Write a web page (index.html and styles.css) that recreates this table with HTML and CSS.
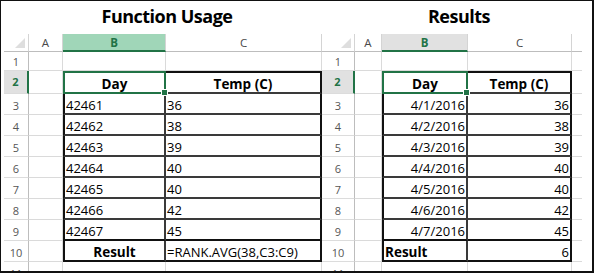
FILE: index.html
```html
<!DOCTYPE html>
<html>
<head>
<meta charset="utf-8">
<link rel="stylesheet" href="styles.css">
</head>
<body>
<div class="frame">
  <section class="panel panel-l">
    <h2 class="title">Function Usage</h2>
    <div class="sheet sheet-l">
      <div class="corner"><svg width="10" height="10" viewBox="0 0 10 10"><polygon points="10,0 10,10 0,10" fill="#dedede"/></svg></div>
      <div class="ch">A</div><div class="ch ch-sel-l">B</div><div class="ch">C</div>

      <div class="rh">1</div><div class="c"></div><div class="c"></div><div class="c"></div>
      <div class="rh rh-sel">2</div><div class="c"></div><div class="c t tl tt sel hd center">Day</div><div class="c t tr tt hd center">Temp (C)</div>
      <div class="rh">3</div><div class="c"></div><div class="c t tl">42461</div><div class="c t tr">36</div>
      <div class="rh">4</div><div class="c"></div><div class="c t tl">42462</div><div class="c t tr">38</div>
      <div class="rh">5</div><div class="c"></div><div class="c t tl">42463</div><div class="c t tr">39</div>
      <div class="rh">6</div><div class="c"></div><div class="c t tl">42464</div><div class="c t tr">40</div>
      <div class="rh">7</div><div class="c"></div><div class="c t tl">42465</div><div class="c t tr">40</div>
      <div class="rh">8</div><div class="c"></div><div class="c t tl">42466</div><div class="c t tr">42</div>
      <div class="rh">9</div><div class="c"></div><div class="c t tl tm">42467</div><div class="c t tr tm">45</div>
      <div class="rh">10</div><div class="c"></div><div class="c t tl tb hd center">Result</div><div class="c t tr tb">=RANK.AVG(38,C3:C9)</div>
      <div class="rh">11</div><div class="c"></div><div class="c"></div><div class="c"></div>
    </div>
  </section>
  <section class="panel panel-r">
    <h2 class="title">Results</h2>
    <div class="sheet sheet-r">
      <div class="corner"><svg width="10" height="10" viewBox="0 0 10 10"><polygon points="10,0 10,10 0,10" fill="#dedede"/></svg></div>
      <div class="ch">A</div><div class="ch ch-sel-r">B</div><div class="ch">C</div><div class="ch ch-end"></div>

      <div class="rh">1</div><div class="c"></div><div class="c"></div><div class="c"></div><div class="c end"></div>
      <div class="rh rh-sel">2</div><div class="c"></div><div class="c t tl tt sel hd center">Day</div><div class="c t tr tt hd center">Temp (C)</div><div class="c end"></div>
      <div class="rh">3</div><div class="c"></div><div class="c t tl right">4/1/2016</div><div class="c t tr right">36</div><div class="c end"></div>
      <div class="rh">4</div><div class="c"></div><div class="c t tl right">4/2/2016</div><div class="c t tr right">38</div><div class="c end"></div>
      <div class="rh">5</div><div class="c"></div><div class="c t tl right">4/3/2016</div><div class="c t tr right">39</div><div class="c end"></div>
      <div class="rh">6</div><div class="c"></div><div class="c t tl right">4/4/2016</div><div class="c t tr right">40</div><div class="c end"></div>
      <div class="rh">7</div><div class="c"></div><div class="c t tl right">4/5/2016</div><div class="c t tr right">40</div><div class="c end"></div>
      <div class="rh">8</div><div class="c"></div><div class="c t tl right">4/6/2016</div><div class="c t tr right">42</div><div class="c end"></div>
      <div class="rh">9</div><div class="c"></div><div class="c t tl tm right">4/7/2016</div><div class="c t tr tm right">45</div><div class="c end"></div>
      <div class="rh">10</div><div class="c"></div><div class="c t tl tb hd">Result</div><div class="c t tr tb right">6</div><div class="c end"></div>
      <div class="rh">11</div><div class="c"></div><div class="c"></div><div class="c"></div><div class="c end"></div>
    </div>
  </section>
</div>
</body>
</html>
```
FILE: styles.css
```css
html, body {
  margin: 0;
  padding: 0;
  background: #fff;
}

.frame {
  box-sizing: border-box;
  width: 594px;
  height: 273px;
  border: 1px solid #111;
  border-right-width: 2px;
  border-bottom-width: 2px;
  display: flex;
  padding-left: 3px;
  background: #fff;
  overflow: hidden;
  font-family: "Open Sans", "Noto Sans", sans-serif;
  color: #000;
}

.panel {
  display: flex;
  flex-direction: column;
  min-height: 0;
}

.panel-l { width: 318px; }
.panel-r { width: 260px; }

.title {
  margin: 0;
  box-sizing: border-box;
  height: 33px;
  flex: none;
  padding-top: 4px;
  font-size: 18px;
  line-height: 22px;
  font-weight: 700;
  letter-spacing: -0.5px;
  text-align: center;
  color: #000;
}

.panel-l .title { padding-left: 8px; }
.panel-r .title { padding-left: 14px; }

.sheet {
  display: grid;
  flex: 1;
  min-height: 0;
  overflow: hidden;
  grid-template-rows: 18px 19px 23px repeat(8, 21px) 21px;
  align-content: start;
}

.sheet-l { grid-template-columns: 25px 34px 103px 156px; }
.sheet-r { grid-template-columns: 33px 27px 86px 104px 10px; }

.corner, .ch, .rh, .c {
  box-sizing: border-box;
  display: flex;
  min-width: 0;
  overflow: hidden;
  white-space: nowrap;
}

.corner {
  justify-content: flex-end;
  align-items: flex-end;
  padding: 0 3px 3px 0;
  border-right: 1px solid #d4d4d4;
  border-bottom: 1px solid #bdbdbd;
}

.ch {
  justify-content: center;
  align-items: center;
  font-size: 11.5px;
  color: #4a4a4a;
  border-right: 1px solid #d4d4d4;
  border-bottom: 1px solid #bdbdbd;
}

.ch-end { border-right: none; }

.ch-sel-l {
  background: #a0d6b8;
  color: #217346;
  font-weight: 700;
  border-bottom: 2px solid #217346;
}

.ch-sel-r {
  background: #e1e1e1;
  color: #217346;
  font-weight: 700;
  border-bottom: 2px solid #217346;
}

.rh {
  justify-content: center;
  align-items: flex-end;
  font-size: 11px;
  line-height: 16px;
  color: #555;
  border-right: 1px solid #bdbdbd;
  border-bottom: 1px solid #dcdcdc;
}

.rh-sel {
  background: #e1e1e1;
  color: #217346;
  font-weight: 700;
  border-right: 2px solid #217346;
  align-items: center;
}

.c {
  align-items: flex-end;
  padding: 0 1px;
  font-size: 13px;
  line-height: 16px;
  border-right: 1px solid #dadada;
  border-bottom: 1px solid #dadada;
}

.c.end { border-right: none; }

.t {
  border-right: 2px solid #3a3a3a;
  border-bottom: 2px solid #3a3a3a;
}

.tl { border-left: 2px solid #111; }
.tr { border-right: 2px solid #111; }
.tt { border-top: 2px solid #111; }
.tm { border-bottom: 2px solid #111; }
.tb { border-bottom: 2px solid #111; }

.hd {
  font-weight: 700;
  font-size: 13.5px;
}

.center { justify-content: center; }
.right { justify-content: flex-end; }

.sel {
  position: relative;
  overflow: visible;
  border: 2px solid #217346;
  z-index: 1;
}

.sel::after {
  content: "";
  position: absolute;
  right: -4px;
  bottom: -4px;
  width: 5px;
  height: 5px;
  background: #217346;
  border: 1px solid #fff;
}
```
